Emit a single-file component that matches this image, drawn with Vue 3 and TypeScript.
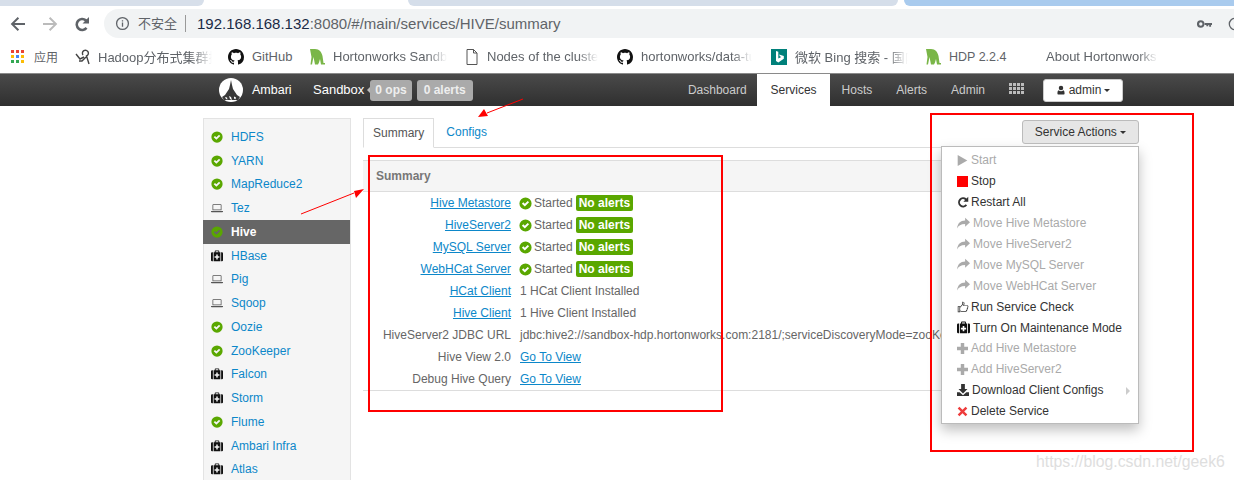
<script setup lang="ts">
const paths: Record<string, string> = {
  check: 'M8 .5a7.500 7.500 0 1 0 0 15A7.500 7.500 0 0 0 8 .5zM3.600 8.200l1.700-1.700 1.900 1.900 3.500-3.500 1.700 1.700-5.200 5.200z',
  laptop: 'M3 3h10a1 1 0 0 1 1 1v7H2V4a1 1 0 0 1 1-1zM3 4v6h10V4zM0 12h16v.5a1 1 0 0 1-1 1H1a1 1 0 0 1-1-1z',
  medkit: 'M5 3V1.500a1 1 0 0 1 1-1h4a1 1 0 0 1 1 1V3H9.800V1.800H6.200V3zM3.500 3h9v12h-9zM7 6v2.200H4.800v2.200H7v2.200h2v-2.200h2.200V8.200H9V6zM0 4.500A1.500 1.500 0 0 1 1.500 3h1v12h-1A1.500 1.500 0 0 1 0 13.500zM16 4.500A1.500 1.500 0 0 0 14.500 3h-1v12h1a1.500 1.500 0 0 0 1.500-1.500z',
  play: 'M1 0l14 8-14 8z',
  stop: 'M0 0h16v16H0z',
  refresh: 'M15 1v6.500H8.500l2.300-2.300A4.200 4.200 0 1 0 11.600 11l1.900 1.800A6.800 6.800 0 1 1 12.700 3.300z',
  share: 'M16 6.500 10 1v3.200C4 4.200 1 7.500 0 14c1.800-3.500 4.600-5.500 10-5.500V12z',
  thumb: 'M1 7h3.200v8H1zM2 8v6h1.200V8zM4.200 7.600 7 4.400V1h.8c1.400 0 2.200 1 2.200 2.300 0 .9-.3 1.700-.6 2.500h4c1.100 0 1.800.8 1.800 1.700 0 .5-.2 1-.5 1.300.3 1-.1 1.800-.7 2.200.1.900-.3 1.600-1 1.900 0 1-.7 1.600-1.700 1.600H7.500c-1.300 0-2.300-.6-3.300-.9v-1c1.100.3 2.100.9 3.300.9h3.800c.5 0 .8-.3.7-.8l-.1-.6.6-.2c.6-.2.8-.7.6-1.300l-.2-.5.5-.3c.5-.3.6-.9.400-1.400l-.2-.4.3-.3c.3-.2.4-.5.4-.8 0-.4-.3-.7-.8-.7H8l.3-.8c.3-.9.7-1.700.7-2.500 0-.6-.2-1.100-.9-1.300v2.900L4.200 9.100z',
  plus: 'M5.500 0h5v5.500H16v5h-5.500V16h-5v-5.500H0v-5h5.500z',
  download: 'M5.500 0h5v6.500h3.500L8 12.500 2 6.500h3.500zM0 11h3.500L8 15l4.500-4H16v5H0z',
  x: 'M3.500 1 8 5.500 12.500 1 15 3.500 10.500 8l4.500 4.500-2.500 2.500L8 10.500 3.500 15 1 12.500 5.500 8 1 3.500z',
  user: 'M8 1a3.300 3.300 0 1 1 0 7.200A3.300 3.300 0 0 1 8 1zM4.300 8.500c1 1 2.300 1.500 3.700 1.500s2.700-.5 3.700-1.500c1.500.5 2 2.200 2 5.500 0 .6-.4 1-1 1H3.300c-.6 0-1-.4-1-1 0-3.300.5-5 2-5.500z',
  github: 'M8 0C3.580 0 0 3.580 0 8c0 3.540 2.290 6.530 5.470 7.590.4.070.55-.17.55-.38 0-.19-.01-.82-.01-1.490-2.010.37-2.530-.49-2.690-.94-.09-.23-.48-.94-.82-1.130-.28-.15-.68-.52-.01-.53.63-.01 1.080.58 1.230.82.72 1.210 1.870.87 2.330.66.07-.52.28-.87.51-1.070-1.780-.2-3.640-.89-3.640-3.950 0-.87.31-1.590.82-2.150-.08-.2-.36-1.020.08-2.120 0 0 .67-.21 2.200.82.64-.18 1.320-.27 2-.27.68 0 1.360.09 2 .27 1.530-1.040 2.200-.82 2.200-.82.44 1.100.16 1.920.08 2.120.51.56.82 1.270.82 2.150 0 3.070-1.870 3.750-3.650 3.950.29.25.54.73.54 1.480 0 1.070-.01 1.930-.01 2.200 0 .21.15.46.55.38A8.013 8.013 0 0 0 16 8c0-4.420-3.580-8-8-8z',
  leaf: 'M1 0h5c4.500 0 6.500 3 7.500 7l1 7H16v1.500h-4L11 10l-1 3.500-1 2H6L4.500 8 3 15.500H1.500L2.500 8z',
}
const apps = ['#ea4335','#ea4335','#ea4335','#fbbc05','#4285f4','#fbbc05','#34a853','#34a853','#fbbc05']
const services = [
  ['HDFS','check'],['YARN','check'],['MapReduce2','check'],['Tez','laptop'],['Hive','check'],
  ['HBase','medkit'],['Pig','laptop'],['Sqoop','laptop'],['Oozie','check'],['ZooKeeper','check'],
  ['Falcon','medkit'],['Storm','medkit'],['Flume','check'],['Ambari Infra','medkit'],['Atlas','medkit'],
]
const started = ['Hive Metastore','HiveServer2','MySQL Server','WebHCat Server']
const menu = [
  { t:'Start', i:'play', off:true },
  { t:'Stop', i:'stop', red:true },
  { t:'Restart All', i:'refresh' },
  { t:'Move Hive Metastore', i:'share', off:true },
  { t:'Move HiveServer2', i:'share', off:true },
  { t:'Move MySQL Server', i:'share', off:true },
  { t:'Move WebHCat Server', i:'share', off:true },
  { t:'Run Service Check', i:'thumb' },
  { t:'Turn On Maintenance Mode', i:'medkit' },
  { t:'Add Hive Metastore', i:'plus', off:true },
  { t:'Add HiveServer2', i:'plus', off:true },
  { t:'Download Client Configs', i:'download', sub:true },
  { t:'Delete Service', i:'x', del:true },
]
</script>

<template>
  <div class="page">
    <div class="tabstrip"><i class="t1"></i><i class="t2"></i><i class="t3"></i><i class="t4"></i></div>

    <div class="toolbar">
      <svg class="nav-ic" viewBox="0 0 16 16"><path d="M15 7H4.500l4.600-4.600L7.700 1 .7 8l7 7 1.400-1.400L4.500 9H15z"/></svg>
      <svg class="nav-ic dim" viewBox="0 0 16 16"><path d="M1 7h10.500L6.900 2.400 8.300 1l7 7-7 7-1.400-1.400L11.500 9H1z"/></svg>
      <svg class="nav-ic" viewBox="0 0 16 16"><path :d="paths.refresh"/></svg>
      <div class="omni">
        <svg class="info" viewBox="0 0 16 16"><path fill-rule="evenodd" d="M8 1a7 7 0 1 0 0 14A7 7 0 0 0 8 1zM8 2.400a5.600 5.600 0 1 1 0 11.200A5.600 5.600 0 0 1 8 2.400zM7.300 4.500h1.400v1.400H7.300zM7.300 7h1.400v4.500H7.300z"/></svg>
        <span class="insecure">不安全</span>
        <span class="url"><b>192.168.168.132</b>:8080/#/main/services/HIVE/summary</span>
        <svg class="key" viewBox="0 0 16 10"><path fill-rule="evenodd" d="M4 1a4 4 0 1 1-.1 8A4 4 0 0 1 4 1zM4 3.200a1.800 1.800 0 1 0 .1 3.600A1.800 1.800 0 0 0 4 3.200zM7.500 4H16v2h-1v2h-2V6h-1v1.500h-2V6H7.500z"/></svg>
        <svg class="acct" viewBox="0 0 16 16"><circle cx="8" cy="8" r="6.500" fill="none" stroke="#5f6368" stroke-width="1.500"/></svg>
      </div>
    </div>

    <div class="bookmarks">
      <span class="apps"><i v-for="(c, n) in apps" :key="n" :style="{ background: c }"></i></span>
      <span class="bm w-apps">应用</span>
      <svg class="bi b-hadoop" viewBox="0 0 16 16"><path fill="none" stroke="#444" stroke-width="1.400" d="M1 5l4 5 4-2M8 6a3 3 0 1 1 3.500 1L14 15M11 8 7 12H4"/></svg>
      <span class="bm w-hadoop fade">Hadoop分布式集群搭</span>
      <svg class="bi b-gh" viewBox="0 0 16 16"><path fill-rule="evenodd" fill="#111" :d="paths.github"/></svg>
      <span class="bm w-gh">GitHub</span>
      <svg class="bi b-leaf" viewBox="0 0 16 16"><path fill="#7ab648" :d="paths.leaf"/></svg>
      <span class="bm w-sand fade">Hortonworks Sandbox</span>
      <svg class="bi b-doc" viewBox="0 0 14 16"><path fill="none" stroke="#555" d="M2 .5h6.500l3.500 3.500v11.500H2zM8.500.5V4H12"/></svg>
      <span class="bm w-nodes fade">Nodes of the cluster</span>
      <svg class="bi b-gh2" viewBox="0 0 16 16"><path fill-rule="evenodd" fill="#111" :d="paths.github"/></svg>
      <span class="bm w-data fade">hortonworks/data-tutorials</span>
      <svg class="bi b-bing" viewBox="0 0 16 16"><path fill="#00807a" d="M0 0h16v16H0z"/><path fill="#fff" d="M5 2l2.300.8v6.700l3-1.500-1.500-.8-.7-1.700 4.700 1.600v2.600L7.300 13.500 5 12z"/></svg>
      <span class="bm w-bing fade">微软 Bing 搜索 - 国内版</span>
      <svg class="bi b-leaf2" viewBox="0 0 16 16"><path fill="#7ab648" :d="paths.leaf"/></svg>
      <span class="bm w-hdp">HDP 2.2.4</span>
      <span class="bm w-about fade">About Hortonworks</span>
    </div>

    <header class="topbar">
      <svg class="logo" viewBox="0 0 24 24"><circle cx="12" cy="12" r="12" fill="#fff"/><path fill="#3a3a3a" d="M12 2l1 5 1 4 4 6 3 2-2 3H5l-2-3 3-2 4-6 1-4z"/><path fill="#fff" d="M6 19l2 .5.500 2L7 21zM10 18l2 1 1 3-2-1zM15 18.500l2 1-.5 1.800-1.500-.8z"/></svg>
      <span class="brand">Ambari</span>
      <span class="cluster">Sandbox</span>
      <i class="caret-l"></i>
      <span class="pill p1">0 ops</span>
      <span class="pill">0 alerts</span>
      <nav class="nav">
        <a class="dash">Dashboard</a><a class="on">Services</a><a>Hosts</a><a>Alerts</a><a>Admin</a>
        <span class="grid"><i v-for="n in 12" :key="n"></i></span>
        <button class="admin"><svg class="ic" viewBox="0 0 16 16"><path fill-rule="evenodd" :d="paths.user"/></svg> admin <i class="caret"></i></button>
      </nav>
    </header>

    <main class="body">
      <aside class="side">
        <div v-for="s in services" :key="s[0]" class="srv" :class="{ active: s[0] === 'Hive' }">
          <svg class="ic" :class="s[1]" viewBox="0 0 16 16"><path fill-rule="evenodd" :d="paths[s[1]]"/></svg>
          <span>{{ s[0] }}</span>
        </div>
      </aside>

      <section class="content">
        <div class="tabsrow">
          <span class="tab on">Summary</span>
          <span class="tab cfg">Configs</span>
          <div class="actions">
            <button class="sa">Service Actions <i class="caret"></i></button>
            <ul class="menu">
              <li v-for="m in menu" :key="m.t" :class="{ off: m.off, sub: m.sub }">
                <svg class="mi" :class="[m.i, { red: m.red, del: m.del }]" viewBox="0 0 16 16"><path fill-rule="evenodd" :d="paths[m.i]"/></svg>
                <span>{{ m.t }}</span>
                <i v-if="m.sub" class="arrow"></i>
              </li>
            </ul>
          </div>
        </div>
        <div class="panel">
          <div class="head">Summary</div>
          <div class="rows">
            <div v-for="s in started" :key="s" class="row">
              <a class="lab">{{ s }}</a>
              <div class="val"><svg class="ic check st" viewBox="0 0 16 16"><path fill-rule="evenodd" :d="paths.check"/></svg> Started <span class="ok">No alerts</span></div>
            </div>
            <div class="row"><a class="lab">HCat Client</a><div class="val">1 HCat Client Installed</div></div>
            <div class="row"><a class="lab">Hive Client</a><div class="val">1 Hive Client Installed</div></div>
            <div class="row"><span class="lab">HiveServer2 JDBC URL</span><div class="val">jdbc:hive2://sandbox-hdp.hortonworks.com:2181/;serviceDiscoveryMode=zooKeeper</div></div>
            <div class="row"><span class="lab">Hive View 2.0</span><div class="val"><a>Go To View</a></div></div>
            <div class="row"><span class="lab">Debug Hive Query</span><div class="val"><a>Go To View</a></div></div>
          </div>
        </div>
      </section>
    </main>

    <svg class="marks" viewBox="0 0 1234 480" width="1234" height="480">
      <g fill="none" stroke="#f00" stroke-width="2">
        <rect x="369" y="156" width="353" height="255"/>
        <rect x="931" y="114" width="262" height="337"/>
      </g>
      <path d="M301 214 354 193M523 99 487 113" stroke="#f00" fill="none"/>
      <path fill="#f00" d="M364 189l-8 9-2-7zM478 117l6-8 4 7z"/>
    </svg>
    <span class="wm">https://blog.csdn.net/geek6</span>
  </div>
</template>

<style>
html, body { margin: 0; height: 100%; overflow: hidden; background: #fff; }
</style>

<style scoped>
.page { position: relative; width: 1234px; height: 480px; overflow: hidden; font: 12px "Liberation Sans", "Noto Sans CJK SC", sans-serif; color: #666; background: #fff; }
a { color: #0c87c9; }
.tabstrip { display: flex; height: 6px; }
.tabstrip i { display: block; }
.t1 { width: 204px; background: #d7dfea; border-bottom-right-radius: 6px; }
.t2 { width: 204px; background: #fff; }
.t3 { width: 490px; margin-right: 6px; background: #d5deea; border-bottom-left-radius: 6px; border-bottom-right-radius: 6px; }
.t4 { flex: 1; background: #a9cbee; border-bottom-left-radius: 8px; }
.toolbar { display: flex; align-items: center; height: 32px; padding: 3px 0 0 10px; box-sizing: border-box; gap: 16px; }
.nav-ic { width: 16px; height: 16px; fill: #5f6368; flex: none; }
.nav-ic.dim { fill: #bbb; }
.omni { flex: 1; height: 29px; background: #f1f3f4; border-radius: 15px 0 0 15px; display: flex; align-items: center; margin-left: -2px; padding-left: 11px; }
.info { width: 15px; height: 15px; fill: #5f6368; flex: none; }
.insecure { margin-left: 8px; font-size: 13px; color: #5f6368; padding-right: 8px; border-right: 1px solid #999; line-height: 17px; }
.url { margin-left: 11px; font-size: 15px; color: #5f6368; }
.url b { font-weight: 400; color: #1a2a45; }
.key { width: 15px; height: 10px; fill: #5f6368; margin-left: auto; }
.acct { width: 14px; height: 14px; margin: 0 -8px 0 16px; }
.bookmarks { display: flex; align-items: center; height: 35px; color: #5f6368; font-size: 13px; padding-top: 2px; box-sizing: border-box; }
.apps { display: grid; grid-template-columns: repeat(3, 3px); grid-auto-rows: 3px; gap: 2px; margin-left: 11px; width: 13px; }
.apps i { display: block; }
.bm { white-space: nowrap; overflow: hidden; flex: none; }
.fade { -webkit-mask-image: linear-gradient(to right, #000 82%, transparent); mask-image: linear-gradient(to right, #000 82%, transparent); }
.bi { height: 16px; flex: none; width: 16px; }
.w-apps { margin-left: 10px; width: 24px; font-size: 12px; }
.b-hadoop { margin-left: 17px; }
.w-hadoop { margin-left: 7px; width: 114px; }
.b-gh { margin-left: 16px; }
.w-gh { margin-left: 8px; width: 41px; }
.b-leaf { margin-left: 16px; }
.w-sand { margin-left: 8px; width: 114px; }
.b-doc { margin-left: 18px; width: 14px; }
.w-nodes { margin-left: 8px; width: 111px; }
.b-gh2 { margin-left: 19px; }
.w-data { margin-left: 8px; width: 111px; }
.b-bing { margin-left: 19px; }
.w-bing { margin-left: 8px; width: 113px; }
.b-leaf2 { margin-left: 17px; }
.w-hdp { margin-left: 8px; width: 60px; font-size: 12.500px; }
.w-about { margin-left: 37px; width: 112px; }
.topbar { height: 33px; display: flex; align-items: center; padding-left: 219px; background: linear-gradient(#4a4a4a, #2f2f2f); border-top: 1px solid #8a8a8a; box-sizing: border-box; color: #fff; }
.logo { width: 24px; height: 24px; flex: none; }
.brand { margin-left: 9px; font-size: 12.500px; width: 41px; }
.cluster { margin: -2px 0 0 20px; font-size: 13px; }
.caret-l { width: 0; height: 0; border: 3px solid transparent; border-right: 3px solid #bbb; border-left: 0; margin-left: 3px; }
.pill { background: #aaa; color: #eee; font-weight: 700; font-size: 12px; line-height: 21px; padding: 0 7px; border-radius: 3px; margin-right: 5px; }
.pill.p1 { padding: 0 5px; }
.nav { margin-left: auto; display: flex; align-items: center; align-self: stretch; padding-right: 111px; }
.nav a { color: #ccc; padding: 0 12px; line-height: 32px; }
.nav a.dash { padding-right: 10px; }
.nav a.on { background: #fff; color: #333; padding: 0 13px 0 14px; }
.grid { display: grid; grid-template-columns: repeat(4, 3px); grid-auto-rows: 3px; gap: 1px; margin: -4px 0 0 12px; width: 15px; }
.grid i { display: block; background: #bbb; }
.admin { margin-left: 19px; width: 80px; height: 23px; background: #fff; border: 1px solid #ccc; border-radius: 3px; font: 12px "Liberation Sans", sans-serif; color: #333; padding: 0; display: flex; align-items: center; justify-content: center; gap: 3px; }
.admin .ic { width: 10px; height: 12px; fill: #333; }
.caret { display: inline-block; width: 0; height: 0; border: 3.500px solid transparent; border-top: 3.500px solid #333; border-bottom: 0; vertical-align: 2px; }
.body { display: flex; padding: 12px 0 0 203px; }
.side { width: 148px; height: 400px; background: #f5f5f5; border: 1px solid #e3e3e3; box-sizing: border-box; padding-top: 6px; flex: none; margin-right: 12px; }
.srv { height: 23.750px; display: flex; align-items: center; color: #0c87c9; font-size: 12px; padding-left: 7px; white-space: nowrap; }
.srv span { margin-left: 8px; }
.srv.active { background: #666; color: #fff; font-weight: 700; margin: 0 0 0 -1px; padding-left: 8px; }
.ic { width: 12px; height: 12px; flex: none; }
.ic.check { fill: #5aa700; }
.ic.laptop { fill: #555; }
.ic.medkit { fill: #111; }
.ic.st { width: 13px; height: 13px; margin-left: -1px; }
.content { width: 776px; flex: none; }
.tabsrow { display: flex; position: relative; height: 30px; border-bottom: 1px solid #ddd; box-sizing: border-box; }
.tab { line-height: 28px; padding: 0 10px; color: #0c87c9; }
.tab.cfg { margin-left: 2px; }
.tab.on { color: #555; background: #fff; border: 1px solid #ddd; border-bottom: 1px solid #fff; height: 30px; box-sizing: border-box; padding: 0 9px; }
.actions { position: absolute; right: 0; top: 2px; z-index: 3; width: 198px; text-align: right; }
.sa { width: 117px; height: 24px; background: #e6e6e6; border: 1px solid #bbb; border-radius: 3px; font: 12px "Liberation Sans", sans-serif; color: #333; padding: 0; }
.menu { list-style: none; margin: 2px 0 0; padding: 3px 0; width: 198px; height: 278px; box-sizing: border-box; background: #fff; border: 1px solid #bbb; box-shadow: 0 6px 12px rgba(0,0,0,.25); text-align: left; }
.menu li { height: 20.900px; display: flex; align-items: center; padding-left: 15px; color: #333; position: relative; white-space: nowrap; }
.menu li.off { color: #aaa; }
.mi { width: 11px; height: 11px; fill: currentColor; margin-right: 3px; flex: none; }
.mi.share, .mi.medkit { width: 13px; height: 13px; }
.mi.thumb, .mi.refresh { width: 12px; height: 12px; margin-right: 2px; }
.mi.download { width: 12px; height: 12px; }
.mi.medkit { fill: #111; }
.mi.red { fill: #f00; }
.mi.del { fill: #ee3c3c; }
.arrow { position: absolute; right: 8px; top: 7px; border: 4px solid transparent; border-left: 4px solid #ccc; border-right: 0; }
.panel { margin-top: 12px; border-top: 1px solid #ddd; border-bottom: 1px solid #ddd; height: 231px; box-sizing: border-box; }
.head { height: 30px; line-height: 30px; padding-left: 13px; background: #f5f5f5; border-bottom: 1px solid #ddd; font-weight: 700; color: #777; }
.row { display: flex; height: 22px; align-items: center; white-space: nowrap; }
.lab { width: 148px; text-align: right; flex: none; color: #666; }
a.lab { color: #0c87c9; text-decoration: underline; }
.val { margin-left: 9px; display: flex; align-items: center; gap: 2px; color: #666; }
.val a { text-decoration: underline; }
.ok { background: #5aa700; color: #fff; font-weight: 700; line-height: 16px; padding: 0 3px; border-radius: 2px; margin-left: 1px; }
.marks { position: absolute; left: 0; top: 0; z-index: 5; pointer-events: none; }
.wm { position: absolute; left: 1036px; top: 453px; font-size: 15.800px; color: #dedede; z-index: 6; }
</style>
